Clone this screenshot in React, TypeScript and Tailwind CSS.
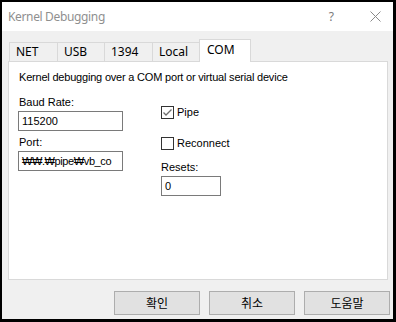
import * as React from "react"

const tabs = [
  { label: "NET", w: "w-[49px]" },
  { label: "USB", w: "w-[48px]" },
  { label: "1394", w: "w-[49px]" },
  { label: "Local", w: "w-[48px]" },
]

function Checkbox({ checked, label }: { checked?: boolean; label: string }) {
  return (
    <div className="flex h-[13px] items-center">
      <div className="flex h-[13px] w-[13px] items-center justify-center border border-[#333333] bg-white">
        {checked && (
          <svg width="11" height="11" viewBox="0 0 11 11">
            <polyline
              points="1.5,5.5 4,8 9.5,2.5"
              fill="none"
              stroke="#6e6e6e"
              strokeWidth="1.3"
            />
          </svg>
        )}
      </div>
      <span className="ml-[3px] leading-[13px]">{label}</span>
    </div>
  )
}

function Field({ value, w, tight }: { value: string; w: string; tight?: boolean }) {
  return (
    <div
      className={`h-[20px] ${w} overflow-hidden whitespace-nowrap border border-[#7a7a7a] bg-white pl-[3px] leading-[18px] ${tight ? "tracking-[-0.4px]" : ""}`}
    >
      {value}
    </div>
  )
}

export default function App() {
  const dlgFont = { fontFamily: '"Liberation Sans", Arial, sans-serif' }
  const uiFont = { fontFamily: '"Noto Sans", "Open Sans", sans-serif' }
  const krFont = { fontFamily: '"Noto Sans CJK KR", "Noto Sans", sans-serif' }

  return (
    <div className="h-[322px] w-[396px] bg-black pb-[3px] pl-[2px] pr-[3px] pt-[2px]">
      <div className="flex h-full w-full flex-col bg-[#f0f0f0]">
        {/* title bar */}
        <div className="flex h-[29px] items-center bg-white pl-[6px] text-[12px] text-[#8f8f8f]" style={uiFont}>
          <span className="tracking-[-0.35px]">Kernel Debugging</span>
          <span className="ml-auto text-[#7a7a7a]">?</span>
          <svg className="ml-[36px] mr-[12px]" width="11" height="11" viewBox="0 0 11 11">
            <path d="M0.5 0.5 L10.5 10.5 M10.5 0.5 L0.5 10.5" stroke="#8a8a8a" strokeWidth="1" />
          </svg>
        </div>

        {/* tabs */}
        <div className="ml-[7px] mt-[8px] flex items-end text-[12px] text-black" style={uiFont}>
          {tabs.map((t, i) => (
            <div
              key={t.label}
              className={`${t.w} ${i > 0 ? "-ml-px" : ""} flex h-[19px] items-center border border-b-0 border-[#d9d9d9] bg-[#f0f0f0] pl-[6px]`}
            >
              {t.label}
            </div>
          ))}
          <div className="relative z-10 -mb-px -ml-px flex h-[23px] w-[52px] items-start border border-b-0 border-[#d9d9d9] bg-white pl-[7px] pt-[2px] leading-[16px]">
            COM
          </div>
        </div>

        {/* panel */}
        <div
          className="ml-[6px] h-[219px] w-[380px] border border-[#d9d9d9] bg-white pl-[9px] text-[11px] text-black"
          style={dlgFont}
        >
          <div className="mt-[9px] pl-[1px] leading-[13px] tracking-[-0.2px]">
            Kernel debugging over a COM port or virtual serial device
          </div>
          <div className="flex">
            <div className="mt-[12px] flex w-[105px] flex-col">
              <div className="pl-[1px] leading-[13px]">Baud Rate:</div>
              <div className="mt-[2px]">
                <Field value="115200" w="w-[105px]" />
              </div>
              <div className="mt-[5px] pl-[1px] leading-[13px]">Port:</div>
              <div className="mt-[2px]">
                <Field value="₩₩.₩pipe₩vb_co" w="w-[105px]" tight />
              </div>
            </div>
            <div className="ml-[38px] mt-[22px] flex flex-col">
              <Checkbox checked label="Pipe" />
              <div className="mt-[18px]">
                <Checkbox label="Reconnect" />
              </div>
              <div className="mt-[11px] leading-[13px]">Resets:</div>
              <div className="mt-[2px]">
                <Field value="0" w="w-[60px]" />
              </div>
            </div>
          </div>
        </div>

        {/* buttons */}
        <div className="mt-[11px] flex justify-end gap-[9px] pr-[3px] text-[12px] text-black" style={krFont}>
          {["확인", "취소", "도움말"].map((b) => (
            <div
              key={b}
              className="flex h-[24px] w-[86px] items-center justify-center border border-[#adadad] bg-[#e1e1e1]"
            >
              {b}
            </div>
          ))}
        </div>
      </div>
    </div>
  )
}
